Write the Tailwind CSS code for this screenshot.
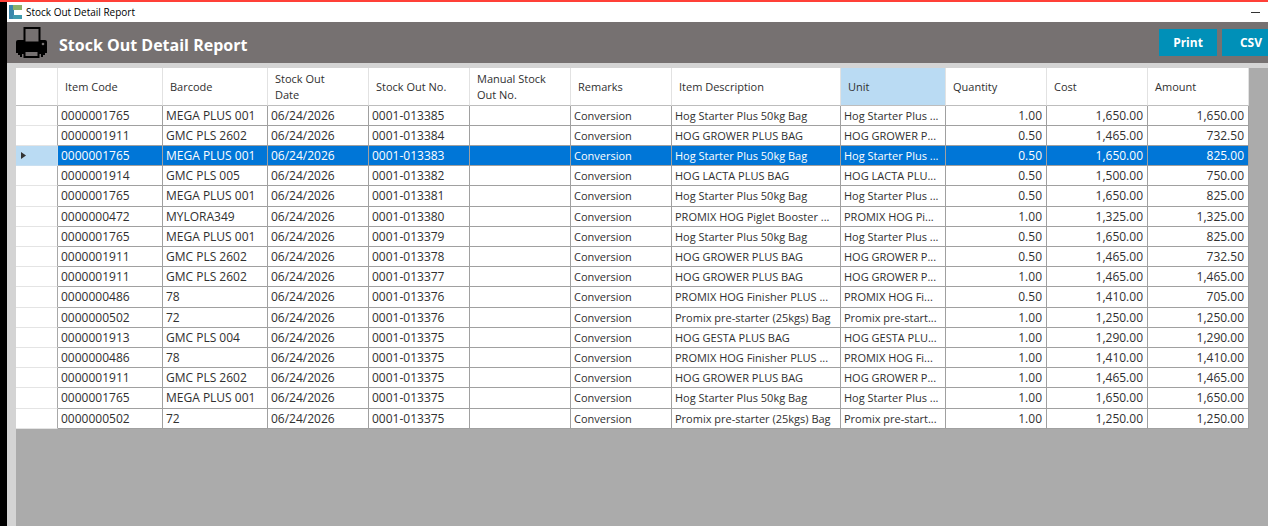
<!DOCTYPE html>
<html lang="en">
<head>
    <meta charset="UTF-8">
    <meta name="viewport" content="width=device-width, initial-scale=1.0">
    <title>Stock Out Detail Report</title>
    <script src="https://cdn.jsdelivr.net/npm/@tailwindcss/browser@4"></script>
</head>
<body class="h-screen overflow-hidden bg-black font-['Open_Sans','Noto_Sans',sans-serif] text-[#303030]">
    <div class="flex h-full flex-col border-t-2 border-[#ff4038] bg-black pl-[7px]">
        <!-- Title bar -->
        <div class="flex h-5 shrink-0 items-center bg-white pl-0.5">
            <svg class="h-[14px] w-[14px]" viewBox="0 0 14 14" aria-hidden="true">
                <path d="M0 0h5v14H0z" fill="#3b87ac"/>
                <path d="M4 10h9v4H4z" fill="#3f9aae"/>
                <path d="M4 0h9v5H4z" fill="#8db069"/>
            </svg>
            <span class="ml-[3px] text-[10px] leading-5 text-black">Stock Out Detail Report</span>
            <button class="mr-2 ml-auto flex h-5 w-[9px] items-center" aria-label="Minimize">
                <span class="h-px w-full bg-[#333]"></span>
            </button>
        </div>

        <!-- Report header -->
        <header class="flex h-[41px] shrink-0 items-center overflow-hidden bg-[#767171] pl-[9px]">
            <svg class="h-[31px] w-[31px] shrink-0" viewBox="0 0 31 31" aria-hidden="true">
                <path d="M2 13h27q2 0 2 2v11h-2v2h-2v2h-2v-3H6v3H4v-2H2v-2H0V15q0-2 2-2z" fill="#000"/>
                <path d="M8.500 1h15v14.500h-15z" fill="#767171" stroke="#000" stroke-width="2"/>
                <path d="M8.500 24h14v6h-14z" fill="#767171" stroke="#000" stroke-width="2"/>
                <circle cx="27" cy="17" r="1.300" fill="#767171"/>
            </svg>
            <h1 class="ml-3 pt-1 text-[16px] leading-6 font-bold text-white">Stock Out Detail Report</h1>
            <div class="-mr-3 ml-auto flex shrink-0 gap-[5px]">
                <button class="h-[27px] w-[58px] bg-[#0090b8] text-[12px] font-bold text-white">Print</button>
                <button class="h-[27px] w-[58px] bg-[#0090b8] text-[12px] font-bold text-white">CSV</button>
            </div>
        </header>

        <!-- Grid -->
        <main class="min-h-0 flex-1 bg-[#d4d4d4] pt-[5px] pl-[9px]">
            <div class="h-full overflow-hidden bg-[#ababab]">
                <table class="w-[1233px] table-fixed border-separate border-spacing-0 bg-white text-[12px] leading-4">
                    <colgroup>
                        <col class="w-[42px]">
                        <col class="w-[105px]">
                        <col class="w-[105px]">
                        <col class="w-[101px]">
                        <col class="w-[101px]">
                        <col class="w-[101px]">
                        <col class="w-[101px]">
                        <col class="w-[169px]">
                        <col class="w-[105px]">
                        <col class="w-[101px]">
                        <col class="w-[101px]">
                        <col class="w-[101px]">
                    </colgroup>
                    <thead>
                        <tr class="h-[38px] text-left text-[11px] [&>th]:border-r [&>th]:border-b [&>th]:border-r-[#e2e2e2] [&>th]:border-b-[#bdbdbd] [&>th]:py-0 [&>th]:pr-3 [&>th]:pl-[7px] [&>th]:font-normal">
                            <th aria-label="Row"></th>
                            <th>Item Code</th>
                            <th>Barcode</th>
                            <th>Stock Out<br>Date</th>
                            <th class="whitespace-nowrap">Stock Out No.</th>
                            <th>Manual Stock<br>Out No.</th>
                            <th>Remarks</th>
                            <th>Item Description</th>
                            <th class="bg-[#badbf3]">Unit</th>
                            <th>Quantity</th>
                            <th>Cost</th>
                            <th>Amount</th>
                        </tr>
                    </thead>
                    <tbody id="rows" class="[&>tr]:h-5 [&>tr:nth-child(5n)]:h-[21px]"></tbody>
                </table>
            </div>
        </main>
    </div>

    <script>
        // description and its shorter form for the unit column
        const starter = ['Hog Starter Plus 50kg Bag', 'Hog Starter Plus ...'];
        const grower = ['HOG GROWER PLUS BAG', 'HOG GROWER P...'];
        const lacta = ['HOG LACTA PLUS BAG', 'HOG LACTA PLU...'];
        const gesta = ['HOG GESTA PLUS BAG', 'HOG GESTA PLU...'];
        const booster = ['PROMIX HOG Piglet Booster ...', 'PROMIX HOG Pi...'];
        const finisher = ['PROMIX HOG Finisher PLUS ...', 'PROMIX HOG Fi...'];
        const prestarter = ['Promix pre-starter (25kgs) Bag', 'Promix pre-start...'];

        // code, barcode, stock out no., product, quantity, cost, amount
        const items = [
            ['0000001765', 'MEGA PLUS 001', '0001-013385', starter, '1.00', '1,650.00', '1,650.00'],
            ['0000001911', 'GMC PLS 2602', '0001-013384', grower, '0.50', '1,465.00', '732.50'],
            ['0000001765', 'MEGA PLUS 001', '0001-013383', starter, '0.50', '1,650.00', '825.00'],
            ['0000001914', 'GMC PLS 005', '0001-013382', lacta, '0.50', '1,500.00', '750.00'],
            ['0000001765', 'MEGA PLUS 001', '0001-013381', starter, '0.50', '1,650.00', '825.00'],
            ['0000000472', 'MYLORA349', '0001-013380', booster, '1.00', '1,325.00', '1,325.00'],
            ['0000001765', 'MEGA PLUS 001', '0001-013379', starter, '0.50', '1,650.00', '825.00'],
            ['0000001911', 'GMC PLS 2602', '0001-013378', grower, '0.50', '1,465.00', '732.50'],
            ['0000001911', 'GMC PLS 2602', '0001-013377', grower, '1.00', '1,465.00', '1,465.00'],
            ['0000000486', '78', '0001-013376', finisher, '0.50', '1,410.00', '705.00'],
            ['0000000502', '72', '0001-013376', prestarter, '1.00', '1,250.00', '1,250.00'],
            ['0000001913', 'GMC PLS 004', '0001-013375', gesta, '1.00', '1,290.00', '1,290.00'],
            ['0000000486', '78', '0001-013375', finisher, '1.00', '1,410.00', '1,410.00'],
            ['0000001911', 'GMC PLS 2602', '0001-013375', grower, '1.00', '1,465.00', '1,465.00'],
            ['0000001765', 'MEGA PLUS 001', '0001-013375', starter, '1.00', '1,650.00', '1,650.00'],
            ['0000000502', '72', '0001-013375', prestarter, '1.00', '1,250.00', '1,250.00']
        ];
        const selected = 2;
        const arrow = '<svg class="ml-[5px] h-[7px] w-[5px]" viewBox="0 0 5 7" aria-hidden="true"><path d="M0 0l5 3.500L0 7z" fill="#333"/></svg>';

        function cellClass(n) {
            if (n > 7) return 'pr-1 text-right';
            if (n > 4) return 'pl-[3px] text-[11px]';
            return 'pl-[3px]';
        }

        document.getElementById('rows').innerHTML = items.map((item, i) => {
            const [code, barcode, no, product, qty, cost, amount] = item;
            const active = i === selected;
            const cells = [code, barcode, '06/24/2026', no, '', 'Conversion', product[0], product[1], qty, cost, amount];
            const head = active ? 'border-[#c9dff0] bg-[#badbf3]' : 'border-r-[#a8a8a8] border-b-[#e4e4e4]';
            return `<tr class="${active ? 'bg-[#0076d7] text-white' : ''}">
                <td class="border-r border-b ${head}">${active ? arrow : ''}</td>
                ${cells.map((text, n) => `<td class="border-r border-b border-[#a0a0a0] whitespace-nowrap ${cellClass(n)}">${text}</td>`).join('')}
            </tr>`;
        }).join('');
    </script>
</body>
</html>
